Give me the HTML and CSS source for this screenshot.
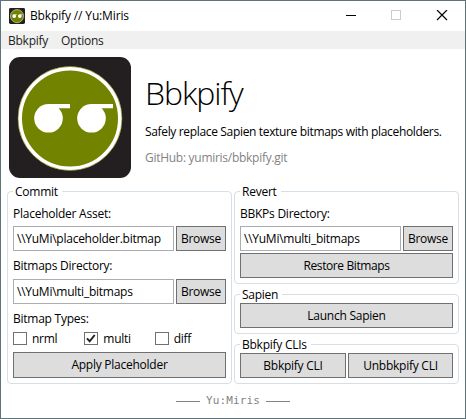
FILE: index.html
```html
<!DOCTYPE html>
<html lang="en">
<head>
<meta charset="utf-8">
<title>Bbkpify // Yu:Miris</title>
<link rel="stylesheet" href="styles.css">
</head>
<body>
<svg class="defs" width="0" height="0">
  <symbol id="logo" viewBox="0 0 122 121">
    <rect width="122" height="121" rx="11" fill="#231f20"/>
    <circle cx="61" cy="61.5" r="50" fill="#728300" stroke="#fff" stroke-width="4"/>
    <circle cx="61" cy="61.5" r="52" fill="none" stroke="#728300" stroke-width=".6"/>
    <g fill="#fff">
      <circle cx="39.500" cy="61.300" r="14.300"/>
      <path d="M39.500 47H61v4.300H49l2 2.500z"/>
      <circle cx="82.500" cy="61.300" r="14.300"/>
      <path d="M82.500 47H104v4.300H92l2 2.500z"/>
    </g>
  </symbol>
</svg>
<div class="window">
  <header class="titlebar">
    <svg class="app-icon" width="16" height="16"><use href="#logo"/></svg>
    <span class="title">Bbkpify // Yu:Miris</span>
    <svg class="controls" width="102" height="12" shape-rendering="crispEdges">
      <path d="M0 5.500h10" stroke="#000"/>
      <rect x="45.500" y=".5" width="9" height="9" fill="none" stroke="#ccc"/>
      <path d="M91 0l10 10M101 0l-10 10" stroke="#000" stroke-width="1.200" shape-rendering="auto"/>
    </svg>
  </header>
  <nav class="menu"><span class="m1">Bbkpify</span><span class="m2">Options</span></nav>
  <section class="hero">
    <svg class="logo" width="122" height="121"><use href="#logo"/></svg>
    <div class="intro">
      <h1>Bbkpify</h1>
      <p class="tagline">Safely replace Sapien texture bitmaps with placeholders.</p>
      <p class="repo">GitHub: yumiris/bbkpify.git</p>
    </div>
  </section>
  <main class="panels">
    <section class="group commit">
      <h2>Commit</h2>
      <p class="label">Placeholder Asset:</p>
      <div class="row"><div class="field"><span>\\YuMi\placeholder.bitmap</span></div><button class="browse">Browse</button></div>
      <p class="label second">Bitmaps Directory:</p>
      <div class="row"><div class="field"><span>\\YuMi\multi_bitmaps</span></div><button class="browse">Browse</button></div>
      <p class="label third">Bitmap Types:</p>
      <div class="checks">
        <span class="check"><i class="box"></i>nrml</span>
        <span class="check"><i class="box"><svg width="12" height="11"><path d="M2 5.300L4.700 8.300L9.700 2" fill="none" stroke="#212121" stroke-width="2"/></svg></i>multi</span>
        <span class="check"><i class="box"></i>diff</span>
      </div>
      <button class="apply">Apply Placeholder</button>
    </section>
    <div class="side">
      <section class="group revert">
        <h2>Revert</h2>
        <p class="label">BBKPs Directory:</p>
        <div class="row"><div class="field"><span>\\YuMi\multi_bitmaps</span></div><button class="browse">Browse</button></div>
        <button class="restore">Restore Bitmaps</button>
      </section>
      <section class="group small">
        <h2>Sapien</h2>
        <button>Launch Sapien</button>
      </section>
      <section class="group small">
        <h2>Bbkpify CLIs</h2>
        <div class="row"><button class="cli">Bbkpify CLI</button><button class="cli2">Unbbkpify CLI</button></div>
      </section>
    </div>
  </main>
  <footer><i class="rule"></i><span>Yu:Miris</span><i class="rule"></i></footer>
</div>
</body>
</html>
```
FILE: styles.css
```css
* { box-sizing: border-box; }
body { margin: 0; background: #fff; color: #000; font: 12px/16px "Open Sans", "Noto Sans", sans-serif; letter-spacing: -.25px; white-space: nowrap; }
h1, h2, p { margin: 0; font-weight: 400; }
.defs { position: absolute; }
.window { width: 466px; height: 419px; border: 1px solid #5f7479; display: flex; flex-direction: column; overflow: hidden; }
.titlebar { height: 30px; flex: none; display: flex; align-items: flex-start; padding: 7px 0 0 8px; }
.title { margin: 0 0 0 5px; letter-spacing: -.14px; }
.controls { margin: 2px 17px 0 auto; }
.menu { height: 18px; flex: none; background: #f0f0f0; padding: 2px 0 0 7px; display: flex; color: #212121; }
.m1 { width: 53px; }
.hero { height: 142px; flex: none; display: flex; padding: 8px 0 0 8px; }
.intro { padding: 12px 0 0 14px; }
h1 { font-size: 32px; line-height: 48px; font-weight: 300; letter-spacing: -1.1px; }
.tagline { margin-top: 7px; letter-spacing: -.34px; }
.repo { margin-top: 10px; color: #838383; letter-spacing: -.28px; }
.panels { display: flex; gap: 2px; padding-left: 6px; height: 193px; flex: none; }
.group { width: 225px; border: 1px solid #d5dfe5; border-radius: 4px; padding: 0 5px; display: flex; flex-direction: column; }
.side { display: flex; flex-direction: column; gap: 10px; }
h2 { font-size: 12px; line-height: 16px; height: 16px; align-self: flex-start; background: #fff; margin: -8px 0 0; padding: 0 4px 0 2px; }
.label { margin-top: 6px; height: 16px; margin-bottom: 4px; }
.second { margin: 7px 0 5px; }
.row { display: flex; gap: 2px; }
.field { width: 161px; height: 25px; border: 1px solid #abadb3; padding: 4px 3px 0; }
button { font: inherit; letter-spacing: inherit; height: 25px; padding: 0; margin: 0; color: #000; background: #ddd; border: 1px solid #707070; }
.browse { width: 50px; }
.third { margin: 7px 0 0; }
.checks { display: flex; margin-top: 4px; height: 16px; }
.check { display: flex; align-items: flex-start; width: 72px; }
.check:nth-child(2) { width: 71px; }
.box { width: 14px; height: 13px; border: 1px solid #707070; margin: 1px 5px 0 0; }
.box svg { display: block; }
.apply { height: 26px; margin-top: 5px; }
.revert { height: 93px; }
.restore { margin-top: 2px; letter-spacing: -.4px; }
.small { height: 40px; }
.small h2 { margin-bottom: 0; }
.cli { width: 106px; }
.cli2 { width: 105px; }
footer { display: flex; justify-content: center; align-items: center; gap: 6px; height: 34px; color: #838383; font: 11px/14px "DejaVu Sans Mono", monospace; letter-spacing: .1px; }
.rule { width: 24px; height: 1px; background: #838383; }
```
